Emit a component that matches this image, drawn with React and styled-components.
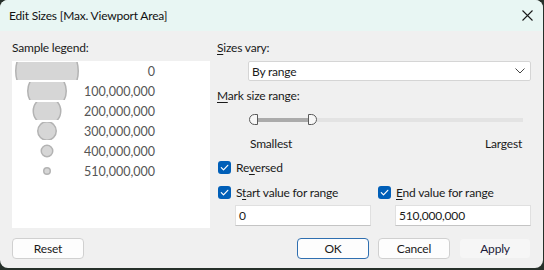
import React from 'react';
import styled, { createGlobalStyle } from 'styled-components';

const Global = createGlobalStyle`
  html, body { margin: 0; padding: 0; background: #26302a; }
  body { width: 544px; height: 270px; overflow: hidden; }
  * { box-sizing: border-box; }
`

const legendRows = [
  { label: '0', size: 64 },
  { label: '100,000,000', size: 40 },
  { label: '200,000,000', size: 29 },
  { label: '300,000,000', size: 20 },
  { label: '400,000,000', size: 13 },
  { label: '510,000,000', size: 8 },
];

function Check() {
  return (
    <Box>
      <svg width='9' height='9' viewBox='0 0 9 9'>
        <path d='M1.3 4.6 L3.5 6.8 L7.8 2.3' fill='none' stroke='#fff' strokeWidth='1.2' strokeLinecap='round' strokeLinejoin='round' />
      </svg>
    </Box>
  );
}

function App() {
  return (
    <>
      <Global />
      <Window>
        <TitleBar>
          <Title>Edit Sizes [Max. Viewport Area]</Title>
          <Close>
            <svg width='11' height='11' viewBox='0 0 11 11'>
              <path d='M0.5 0.5 L10.5 10.5 M10.5 0.5 L0.5 10.5' stroke='#1a1a1a' strokeWidth='1.1' />
            </svg>
          </Close>
        </TitleBar>
        <Body>
          <Columns>
            <LeftCol>
              <Label>Sample legend:</Label>
              <Legend>
                {legendRows.map(r => (
                  <LegendRow key={r.label}>
                    <Mark>
                      <svg width='70' height='18' viewBox='0 0 70 18'>
                        <circle cx='35' cy='9' r={r.size / 2 - 0.75} fill='#d6d6d6' stroke='#b3b3b3' strokeWidth='1.5' />
                      </svg>
                    </Mark>
                    <Value>{r.label}</Value>
                  </LegendRow>
                ))}
              </Legend>
            </LeftCol>
            <RightCol>
              <Label><u>S</u>izes vary:</Label>
              <Select>
                <span>By range</span>
                <svg width='10' height='6' viewBox='0 0 10 6'>
                  <path d='M0.5 0.5 L5 5 L9.5 0.5' fill='none' stroke='#444' strokeWidth='1' />
                </svg>
              </Select>
              <Label $top={4}><u>M</u>ark size range:</Label>
              <Slider>
                <Track>
                  <Thumb $side='left' />
                  <Filled />
                  <Thumb $side='right' />
                  <Rest />
                </Track>
              </Slider>
              <Ends>
                <span>Smallest</span>
                <span>Largest</span>
              </Ends>
              <CheckRow>
                <Check />
                <span>Re<u>v</u>ersed</span>
              </CheckRow>
              <RangeGrid>
                <CheckRow $tight>
                  <Check />
                  <span>S<u>t</u>art value for range</span>
                </CheckRow>
                <CheckRow $tight>
                  <Check />
                  <span><u>E</u>nd value for range</span>
                </CheckRow>
                <Input>0</Input>
                <Input>510,000,000</Input>
              </RangeGrid>
            </RightCol>
          </Columns>
          <Footer>
            <Button>Reset</Button>
            <Actions>
              <Button $primary>OK</Button>
              <Button>Cancel</Button>
              <Button $disabled>Apply</Button>
            </Actions>
          </Footer>
        </Body>
      </Window>
    </>
  );
}

const Window = styled.div`
  width: 543px;
  height: 268px;
  border-radius: 8px;
  overflow: hidden;
  background: #f0f0f0;
  font-family: Lato, 'Noto Sans', sans-serif;
  font-size: 12px;
  letter-spacing: -0.2px;
  color: #1a1a1a;
  display: flex;
  flex-direction: column;
`
const TitleBar = styled.div`
  height: 31px;
  background: #e8f6f3;
  display: flex;
  align-items: center;
  justify-content: space-between;
  padding: 0 10px 0 9px;
`
const Title = styled.div`
  color: #111;
`
const Close = styled.div`
  display: flex;
  align-items: center;
`
const Body = styled.div`
  flex: 1;
  display: flex;
  flex-direction: column;
  padding: 9px 12px 0 12px;
`
const Columns = styled.div`
  display: flex;
  gap: 7px;
`
const LeftCol = styled.div`
  width: 198px;
  display: flex;
  flex-direction: column;
`
const RightCol = styled.div`
  flex: 1;
  display: flex;
  flex-direction: column;
`
const Label = styled.div`
  height: 16px;
  line-height: 16px;
  margin-top: ${p => p.$top || 0}px;
  margin-bottom: 5px;
  u { text-decoration-thickness: 1px; text-underline-offset: 2px; }
`
const Legend = styled.div`
  height: 167px;
  background: #fff;
  display: flex;
  flex-direction: column;
`
const LegendRow = styled.div`
  height: 20px;
  display: flex;
  align-items: center;
`
const Mark = styled.div`
  width: 70px;
  height: 18px;
  display: flex;
  overflow: hidden;
  svg { overflow: hidden; }
`
const Value = styled.div`
  width: 73px;
  text-align: right;
  font-family: Lato, 'Noto Sans', sans-serif;
  font-size: 12.5px;
  letter-spacing: 0;
  color: #555;
`
const Select = styled.div`
  margin-left: 31px;
  height: 20px;
  background: #fff;
  border: 1px solid #d5d5d5;
  border-radius: 2px;
  display: flex;
  align-items: center;
  justify-content: space-between;
  padding: 0 5px 0 3px;
  margin-bottom: 3px;
`
const Slider = styled.div`
  height: 27px;
  padding: 5px 8px 0 32px;
`
const Track = styled.div`
  display: flex;
  align-items: center;
  height: 11px;
`
const Thumb = styled.div`
  width: 9px;
  height: 11px;
  background: #f7f7f7;
  border: 1.5px solid #5a5a5a;
  border-radius: ${p => p.$side === 'left' ? '6px 0 0 6px' : '0 6px 6px 0'};
  ${p => p.$side === 'left' ? 'border-right-width: 1px;' : 'border-left-width: 1px;'}
`
const Filled = styled.div`
  width: 50px;
  height: 4px;
  background: #ababab;
`
const Rest = styled.div`
  flex: 1;
  height: 4px;
  background: #e3e3e3;
`
const Ends = styled.div`
  display: flex;
  justify-content: space-between;
  padding: 0 9px 0 33px;
  height: 16px;
  line-height: 16px;
  margin-bottom: 7px;
`
const CheckRow = styled.div`
  display: flex;
  align-items: center;
  gap: 5px;
  height: 16px;
  margin-bottom: ${p => p.$tight ? 0 : 9}px;
  margin-left: 1px;
  u { text-decoration-thickness: 1px; text-underline-offset: 2px; }
`
const Box = styled.div`
  width: 13px;
  height: 13px;
  border-radius: 3px;
  background: #005fb8;
  display: flex;
  align-items: center;
  justify-content: center;
`
const RangeGrid = styled.div`
  display: grid;
  grid-template-columns: 1fr 1fr;
  column-gap: 6px;
  row-gap: 5px;
`
const Input = styled.div`
  margin-left: 18px;
  height: 21px;
  background: #fff;
  border: 1px solid #e0e0e0;
  border-bottom-color: #c4c4c4;
  padding: 0 3px;
  line-height: 19px;
`
const Footer = styled.div`
  display: flex;
  justify-content: space-between;
  margin-top: 10px;
`
const Actions = styled.div`
  display: flex;
  gap: 9px;
`
const Button = styled.div`
  width: 72px;
  height: 21px;
  line-height: 19px;
  text-align: center;
  border-radius: 4px;
  background: ${p => p.$disabled ? '#f6f6f6' : '#fdfdfd'};
  border: 1px solid ${p => p.$primary ? '#2f6fb0' : p.$disabled ? '#f0f0f0' : '#d0d0d0'};
  color: ${p => p.$disabled ? '#1b1b3a' : '#1a1a1a'};
`

export default App;
